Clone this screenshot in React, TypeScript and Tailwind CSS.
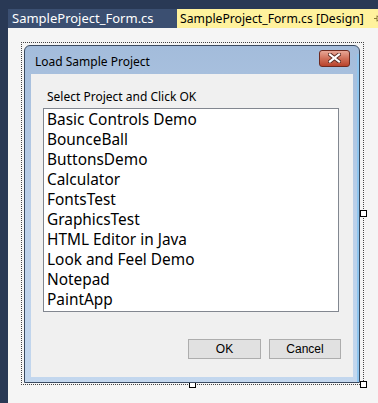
import React from 'react';

const projects = [
  'Basic Controls Demo',
  'BounceBall',
  'ButtonsDemo',
  'Calculator',
  'FontsTest',
  'GraphicsTest',
  'HTML Editor in Java',
  'Look and Feel Demo',
  'Notepad',
  'PaintApp',
];

const Handle: React.FC<{ className: string }> = ({ className }) => (
  <div className={`absolute w-[7px] h-[7px] bg-white border border-black ${className}`} />
);

const App: React.FC = () => {
  return (
    <div
      className="w-[378px] h-[403px] bg-[#293955] flex flex-col overflow-hidden"
      style={{ fontFamily: '"Noto Sans", "Open Sans", sans-serif' }}
    >
      {/* document tabs */}
      <div className="h-[28px] pt-[9px] pl-[8px] flex">
        <div className="w-[169px] shrink-0 h-[19px] bg-[#3b4f71] text-white text-[13px] leading-[19px] pl-[4px] whitespace-nowrap">
          SampleProject_Form.cs
        </div>
        <div className="flex-1 h-[19px] bg-[#fff29d] text-black text-[12.2px] leading-[19px] pl-[3px] flex items-center whitespace-nowrap overflow-hidden">
          <span>SampleProject_Form.cs [Design]</span>
          <svg width="11" height="9" viewBox="0 0 11 9" className="ml-[9px] shrink-0">
            <path d="M1 4.5H4M4 1.5V7.5M4 2.5H9V6.5H4M8 2.5V6.5" stroke="#8a7a3a" strokeWidth="1" fill="none" />
          </svg>
        </div>
      </div>

      {/* designer surface */}
      <div className="flex-1 ml-[8px] bg-[#f5f5f5] pl-[16px] pt-[17px]">
        <div className="relative w-[336px] h-[338px]">
          {/* selection frame */}
          <div className="absolute left-[-3px] top-[-3px] w-[343px] h-[343px] border border-dotted border-[#444]" />
          <Handle className="left-[165px] top-[336px]" />
          <Handle className="left-[336px] top-[336px]" />
          <Handle className="left-[336px] top-[165px]" />

          {/* form window */}
          <div className="relative w-[336px] h-[338px] rounded-t-[6px] border border-[#3a4a60] bg-gradient-to-b from-[#a3bcdb] via-[#bcd0e9] to-[#c3d7ee] flex flex-col px-[6px] pb-[5px]">
            <div className="absolute right-0 top-[8px] bottom-0 w-[2px] bg-[#8fc6f0]" />
            <div className="h-[28px] flex items-center justify-between pl-[4px] pr-[3px]">
              <span className="text-[12px] text-black pt-[4px]">Load Sample Project</span>
              <div className="w-[31px] h-[17px] mt-[-4px] rounded-[3px] border border-[#6e2a20] bg-gradient-to-b from-[#e8a797] via-[#d0705a] to-[#b9422a] flex items-center justify-center">
                <svg width="13" height="10" viewBox="0 0 13 10">
                  <path d="M2 1.5L11 8.5M11 1.5L2 8.5" stroke="#5a2a22" strokeWidth="4" strokeLinecap="square" />
                  <path d="M2 1.5L11 8.5M11 1.5L2 8.5" stroke="#ffffff" strokeWidth="2.2" strokeLinecap="square" />
                </svg>
              </div>
            </div>

            <div className="flex-1 bg-[#f0f0f0] pl-[12px] pr-[12px] pt-[15px]">
              <div className="text-[12px] leading-[16px] text-black pl-[4px]">Select Project and Click OK</div>
              <div className="mt-[3px] w-[296px] h-[204px] bg-white border border-[#828790] py-[1px] pl-[3px]">
                {projects.map(p => (
                  <div key={p} className="text-[15.4px] leading-[20px] text-black whitespace-nowrap">
                    {p}
                  </div>
                ))}
              </div>
              <div className="mt-[27px] flex justify-end gap-[8px]">
                <button
                  className="w-[73px] h-[20px] bg-[#e1e1e1] border border-[#adadad] text-[12px] text-black"
                  style={{ fontFamily: '"Liberation Sans", Arial, sans-serif' }}
                >
                  OK
                </button>
                <button
                  className="w-[72px] h-[20px] bg-[#e1e1e1] border border-[#adadad] text-[12px] text-black"
                  style={{ fontFamily: '"Liberation Sans", Arial, sans-serif' }}
                >
                  Cancel
                </button>
              </div>
            </div>
          </div>
        </div>
      </div>
    </div>
  );
};

export default App;
